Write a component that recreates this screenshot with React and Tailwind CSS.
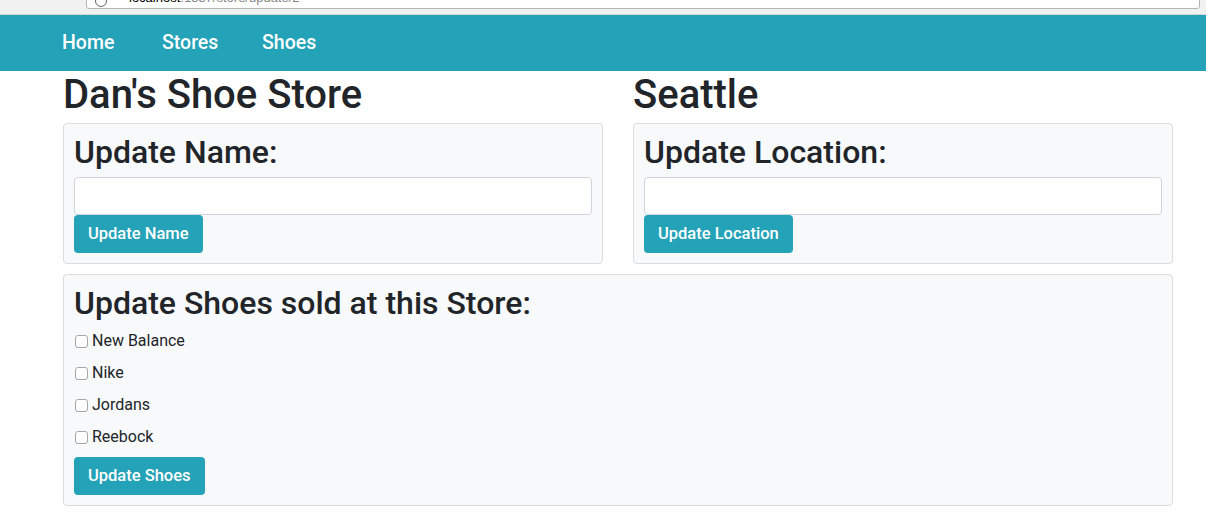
import { useState } from 'react';

const SHOES = ['New Balance', 'Nike', 'Jordans', 'Reebock'];

export default function App() {
  const [name, setName] = useState('');
  const [location, setLocation] = useState('');
  const [checked, setChecked] = useState({});

  return (
    <div className="min-h-screen bg-white text-[#212529] font-['Roboto','Liberation_Sans',Arial,sans-serif]">
      {/* BROWSER CHROME */}
      <div className="h-[15px] bg-[#f1f1f1] border-b border-[#d6d6d6] overflow-hidden flex items-end">
        <div className="ml-[86px] mr-[6px] flex-1 h-[30px] mb-[5px] bg-white border border-[#b4b4b4] rounded-b-[3px] flex items-end px-[8px] pb-[4px] text-[13px] leading-none font-['Liberation_Sans',Arial,sans-serif]">
          <span className="w-[12px] h-[12px] rounded-full border border-[#666] mr-[22px] mb-[-3px]"></span>
          <span className="text-black">localhost</span>
          <span className="text-[#888]">:1337/store/update/2</span>
        </div>
      </div>

      {/* NAVBAR */}
      <nav className="h-[56px] bg-[#24a2b7] flex items-center pl-[62px] text-white text-[19.5px] font-medium">
        <a className="w-[100px] cursor-pointer">Home</a>
        <a className="w-[100px] cursor-pointer">Stores</a>
        <a className="w-[100px] cursor-pointer">Shoes</a>
      </nav>

      <div className="w-[1110px] ml-[63px]">
        <div className="grid grid-cols-2 gap-[30px]">
          <div>
            <h1 className="text-[40px] leading-[48px] mb-[4px] font-medium">Dan's Shoe Store</h1>
            <div className="bg-[#f8f9fa] border border-[#dcdcdc] rounded-[4px] px-[10px] pt-[9px] pb-[10px]">
              <h2 className="text-[32px] leading-[38px] mb-[6px] font-medium">Update Name:</h2>
              <input
                value={name}
                onChange={(e) => setName(e.target.value)}
                className="w-full h-[38px] bg-white border border-[#ced4da] rounded-[4px] px-3 outline-none"
              />
              <button className="h-[38px] px-[14px] bg-[#24a2b7] text-white text-[16.5px] font-medium rounded-[4px]">
                Update Name
              </button>
            </div>
          </div>
          <div>
            <h1 className="text-[40px] leading-[48px] mb-[4px] font-medium">Seattle</h1>
            <div className="bg-[#f8f9fa] border border-[#dcdcdc] rounded-[4px] px-[10px] pt-[9px] pb-[10px]">
              <h2 className="text-[32px] leading-[38px] mb-[6px] font-medium">Update Location:</h2>
              <input
                value={location}
                onChange={(e) => setLocation(e.target.value)}
                className="w-full h-[38px] bg-white border border-[#ced4da] rounded-[4px] px-3 outline-none"
              />
              <button className="h-[38px] px-[14px] bg-[#24a2b7] text-white text-[16.5px] font-medium rounded-[4px]">
                Update Location
              </button>
            </div>
          </div>
        </div>

        <div className="mt-[10px] bg-[#f8f9fa] border border-[#dcdcdc] rounded-[4px] px-[10px] pt-[9px] pb-[10px]">
          <h2 className="text-[32px] leading-[38px] mb-[3px] font-medium">Update Shoes sold at this Store:</h2>
          <div className="flex flex-col">
            {SHOES.map((shoe) => (
              <label key={shoe} className="h-[32px] flex items-center text-[16px] gap-[4px] pl-[1px]">
                <input
                  type="checkbox"
                  checked={!!checked[shoe]}
                  onChange={() => setChecked({ ...checked, [shoe]: !checked[shoe] })}
                  className="appearance-none w-[13px] h-[13px] m-0 bg-white border border-[#a6a6a6] rounded-[3px] checked:bg-[#24a2b7] checked:border-[#24a2b7]"
                />
                {shoe}
              </label>
            ))}
          </div>
          <button className="mt-[4px] h-[38px] px-[14px] bg-[#24a2b7] text-white text-[16.5px] font-medium rounded-[4px]">
            Update Shoes
          </button>
        </div>
      </div>
    </div>
  );
}
